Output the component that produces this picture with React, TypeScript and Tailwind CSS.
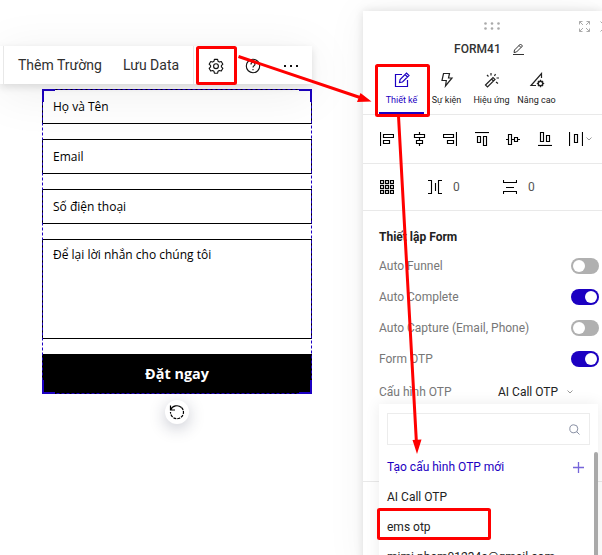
import React from "react";

const Thin = ({ children, size = 14, sw = 1, className = "" }: { children: React.ReactNode; size?: number; sw?: number; className?: string }) => (
  <svg width={size} height={size} viewBox={`0 0 ${size} ${size}`} fill="none" stroke="currentColor" strokeWidth={sw} className={`shrink-0 ${className}`}>
    {children}
  </svg>
);

const Gear = () => (
  <svg width="16" height="16" viewBox="0 0 24 24" fill="none" stroke="#111" strokeWidth="1.7" strokeLinejoin="round">
    <path d="M9.6 2h4.8l.7 3 1.9 1.1 2.9-.9 2.4 4.1-2.2 2.1v2l2.2 2.1-2.4 4.1-2.9-.9-1.9 1.1-.7 3H9.6l-.7-3L7 18.700l-2.900.9-2.400-4.100 2.200-2.100v-2L1.700 9.300l2.400-4.100 2.900.9L8.900 5z" />
    <circle cx="12" cy="12.300" r="3.600" />
  </svg>
);

const Help = () => (
  <Thin size={16} sw={1.1}>
    <circle cx="8" cy="8" r="6.700" />
    <path d="M6 6.500C6 3.500 10 3.600 10 6.200 10 7.600 8 7.700 8 9.500M8 11v1.200" />
  </Thin>
);

const alignIcons = [
  <><path d="M.5 0v14" /><path d="M3.500 2.500h10v3h-10zM3.500 8.500h6v3h-6z" /></>,
  <><path d="M7.500 0v2.500M7.500 5.500v3M7.500 11.500V14M2.500 2.500h10v3h-10zM4.500 8.500h6v3h-6z" /></>,
  <><path d="M13.500 0v14" /><path d="M.5 2.500h10v3H.5zM4.500 8.500h6v3h-6z" /></>,
  <><path d="M0 .5h14" /><path d="M2.500 4.500h3v6h-3zM8.500 4.500h3v9h-3z" /></>,
  <><path d="M0 7.500h2.500M5.500 7.500h3M11.500 7.500H14M2.500 2.500h3v10h-3zM8.500 5.500h3v4h-3z" /></>,
  <><path d="M0 13.500h14" /><path d="M2.500 .5h3v9h-3zM8.500 3.500h3v6h-3z" /></>,
];

const tabs = [
  {
    label: "Thiết kế",
    icon: <><path d="M8 2.500H1.500v12h12V8" /><path d="M5.500 10.500l.6-3L12.500 1l2.500 2.500-6.500 6.500z M11 2.500L13.500 5" /></>,
  },
  { label: "Sự kiện", icon: <path d="M4.500 1.500h6L9.500 6H13L6.500 14l.8-5.500H3z" /> },
  {
    label: "Hiệu ứng",
    icon: <><path d="M1.500 13L9 5.500l2 2L3.500 15zM7.500 7l2 2" /><path d="M7 1v2.500M11.500 2L10.500 4M3 3l1.500 1.500M12.500 6H15M12 10l2 1.500" /></>,
  },
  {
    label: "Nâng cao",
    icon: <><path d="M7 13.500H2L12.500 1.500V6" /><circle cx="11.500" cy="11.500" r="2.300" strokeWidth="1.500" /><path d="M11.500 7.800v1.400M11.500 13.800v1.400M7.800 11.500h1.400M13.800 11.500h1.400M9 9l1 1M13 13l1 1M14 9l-1 1M10 13l-1 1" /></>,
  },
];

const settings = [
  { label: "Auto Funnel", on: false },
  { label: "Auto Complete", on: true },
  { label: "Auto Capture (Email, Phone)", on: false },
  { label: "Form OTP", on: true },
];

const Toggle = ({ on }: { on: boolean }) => (
  <span className={`flex h-4 w-7 items-center rounded-full px-0.5 ${on ? "justify-end bg-[#1c00c2]" : "bg-[#b0b0b0]"}`}>
    <span className="size-3 rounded-full bg-white" />
  </span>
);

const Chevron = () => (
  <svg width="6" height="4" viewBox="0 0 6 4" fill="none" stroke="#999"><path d="M.5 .5L3 3 5.500 .5" /></svg>
);

function Toolbar() {
  return (
    <div className="relative z-10 flex h-[38px] w-[312px] items-center bg-white text-[14px] text-[#303030] shadow-[0_3px_8px_rgba(0,0,0,0.12),0_8px_50px_rgba(0,0,0,0.08)]">
      <div className="ml-[3px] h-full w-px bg-[#e8e8e8]" />
      <span className="ml-[14px] w-[105px] whitespace-nowrap">Thêm Trường</span>
      <span className="w-[70px] whitespace-nowrap">Lưu Data</span>
      <div className="h-full w-px bg-[#e8e8e8]" />
      <div className="ml-[14px] mt-0.5 flex items-center gap-[21px] text-[#111]">
        <Gear />
        <Help />
        <svg width="16" height="4" viewBox="0 0 16 4" className="ml-px"><path d="M1 1h2v2H1zM7 1h2v2H7zM13 1h2v2h-2z" fill="#111" /></svg>
      </div>
    </div>
  );
}

function LeadForm() {
  const field = "flex h-[35px] items-center border border-black pl-[10px]";
  return (
    <div className="relative ml-[42px] mt-[5px] flex h-[305px] w-[270px] flex-col gap-[15px] font-['Open_Sans','Noto_Sans',sans-serif] text-[12px] text-black">
      <div className={field}>Họ và Tên</div>
      <div className={field}>Email</div>
      <div className={field}>Số điện thoại</div>
      <div className="h-[100px] border border-black pl-[10px] pt-[6px]">Để lại lời nhắn cho chúng tôi</div>
      <div className="flex h-10 items-center justify-center bg-black text-[14.4px] font-bold text-white">Đặt ngay</div>
      <svg className="absolute inset-0" width="270" height="305" fill="none" stroke="#1c00c2">
        <rect x=".5" y=".5" width="269" height="304" strokeDasharray="3 2" />
        <path strokeWidth="2" d="M13 1H1v12M257 1h12v12M13 304H1v-13M257 304h12v-13" />
      </svg>
    </div>
  );
}

function OtpMenu() {
  return (
    <div className="absolute left-4 top-[393px] h-[170px] w-[219px] bg-white px-2 pt-[9px] text-[12px] text-[#222] shadow-[0_0_14px_rgba(0,0,0,0.08)]">
      <div className="flex h-8 items-center justify-end border border-[#ececec] pr-[9px]">
        <Thin size={11} className="text-[#888fa3]"><circle cx="4.800" cy="4.800" r="4" /><path d="M7.700 7.700L10.500 10.500" /></Thin>
      </div>
      <div className="mt-[7px] flex h-[30px] items-center justify-between pr-[6px] text-[#1c00c2]">
        <span>Tạo cấu hình OTP mới</span>
        <Thin size={11} sw={1.3} className="opacity-60"><path d="M5.500 0v11M0 5.500h11" /></Thin>
      </div>
      <div className="flex h-[30px] items-center">AI Call OTP</div>
      <div className="flex h-[30px] items-center">ems otp</div>
      <div className="flex h-[30px] items-center whitespace-nowrap">mimi.pham01234a@gmail.com</div>
      <div className="absolute right-0 top-12 h-[130px] w-1 rounded bg-[#a9a9a9]" />
    </div>
  );
}

function Panel() {
  return (
    <aside className="relative z-20 mt-[11px] flex h-[560px] w-[239px] shrink-0 flex-col bg-white shadow-[0_0_9px_rgba(0,0,0,0.12),0_0_40px_rgba(0,0,0,0.05)]">
      <div className="flex h-[27px] items-center overflow-hidden pl-[121px]">
        <svg width="16" height="8" viewBox="0 0 16 8" fill="#aaa" className="mt-0.5 shrink-0">
          {[1.500, 8, 14.500].map((x) => [1.500, 6.500].map((y) => <circle key={`${x}-${y}`} cx={x} cy={y} r="1.300" />))}
        </svg>
        <Thin size={11} className="ml-[79px] mt-[3px] text-[#aaa]">
          <path d="M3.500 .5h-3v3M7.500 .5h3v3M3.500 10.500h-3v-3M7.500 10.500h3v-3M.5 .5l3.500 3.500M10.500 .5L7 4M.5 10.500L4 7M10.500 10.500L7 7" />
        </Thin>
        <Thin size={11} className="ml-[10px] mt-[3px] text-[#aaa]"><path d="M.5 .5l10 10M10.500 .5l-10 10" /></Thin>
      </div>
      <div className="flex h-[22px] items-center pl-[91px] text-[12px] font-medium text-[#333]">
        <span className="w-[58px] tracking-[0.05px]">FORM41</span>
        <Thin size={12} className="text-[#333]"><path d="M1 11.500h11M2 9.500l.5-2.500L8.500 1l2 2-6 6zM7 2.500l2 2" /></Thin>
      </div>
      <nav className="flex h-[55px] border-b border-[#e9e9e9] pl-4">
        {tabs.map((t, i) => (
          <div key={t.label} className={`flex h-[54px] w-[45px] flex-col items-center border-b-2 pt-3 text-[9px] leading-[11px] ${i === 0 ? "border-[#1c00c2] text-[#1c00c2]" : "border-transparent text-[#222]"}`}>
            <Thin size={16} sw={1.2}>{t.icon}</Thin>
            <span className="mt-[7px] whitespace-nowrap">{t.label}</span>
          </div>
        ))}
      </nav>
      <div className="flex h-[49px] items-center gap-[17.500px] border-b border-[#e9e9e9] pl-[17px] text-black">
        {alignIcons.map((icon, i) => <Thin key={i} sw={1.15}>{icon}</Thin>)}
        <div className="flex items-center gap-[3px]">
          <Thin sw={1.15}><path d="M.5 0v14M13.500 0v14M5.500 2.500h3v8h-3z" /></Thin>
          <Chevron />
        </div>
      </div>
      <div className="flex h-[47px] items-center border-b border-[#e9e9e9] pl-[17px] text-[12px] text-[#555]">
        <Thin sw={1.2} className="text-black">
          {[0.500, 5.500, 10.500].map((x) => [0.500, 5.500, 10.500].map((y) => <rect key={`${x}-${y}`} x={x} y={y} width="3" height="3" />))}
        </Thin>
        <Thin sw={1.1} className="ml-[34px] text-black"><path d="M0 .5h3.500v13H0M14 .5h-3.500v13H14M7.500 3v8" /></Thin>
        <span className="ml-[11px] w-[50px]">0</span>
        <Thin sw={1.1} className="text-black"><path d="M.5 0v2.500h13V0M.5 14v-2.500h13V14M3 7.500h8" /></Thin>
        <span className="ml-[11px]">0</span>
      </div>
      <section className="flex flex-col px-4 pr-[3px] text-[12px] text-[#777]">
        <h3 className="mt-[14px] flex h-6 items-center font-bold text-[#222]">Thiết lập Form</h3>
        {settings.map((s) => (
          <div key={s.label} className="flex h-[31px] items-center justify-between first-of-type:mt-px">
            <span>{s.label}</span>
            <Toggle on={s.on} />
          </div>
        ))}
        <div className="mt-0.5 flex h-[31px] items-center">
          <span className="w-[119px]">Cấu hình OTP</span>
          <span className="w-[69px] text-[#222]">AI Call OTP</span>
          <Chevron />
        </div>
      </section>
      <div className="mt-[74px] h-px shrink-0 bg-[#e9e9e9]" />
      <OtpMenu />
    </aside>
  );
}

function Annotations() {
  return (
    <svg className="absolute inset-0 z-30" width="602" height="555" fill="none" stroke="#f00" strokeWidth="3">
      <rect x="197.500" y="47.500" width="38" height="36" rx="1" />
      <rect x="376.500" y="65.500" width="52" height="50" rx="1" />
      <rect x="378.500" y="509.500" width="111" height="29" rx="1" />
      <path d="M238.500 56.500L360 97.500M398.500 116L416.500 444" />
      <path d="M371.500 101.500L357 102l3.500-9zM417 454l-4.500-14 9-.5z" fill="#f00" stroke="none" />
    </svg>
  );
}

export default function App() {
  return (
    <div className="relative flex h-[555px] w-[602px] overflow-hidden bg-white font-[Roboto,sans-serif]">
      <main className="w-[363px] shrink-0 pt-[46px]">
        <Toolbar />
        <LeadForm />
        <div className="ml-[165px] mt-1.5 flex size-6 items-center justify-center rounded-full bg-white shadow-[0_4px_16px_rgba(30,40,70,0.25)]">
          <Thin size={16} sw={1.2} className="text-black">
            <path d="M1.500 1.500v4.500H6M1.500 6C3.500 1.500 9 .5 12.500 3.500" />
            <path d="M12.500 3.500A6.500 6.500 0 1 1 1.500 8" strokeDasharray="3 1" />
          </Thin>
        </div>
      </main>
      <Panel />
      <Annotations />
    </div>
  );
}
